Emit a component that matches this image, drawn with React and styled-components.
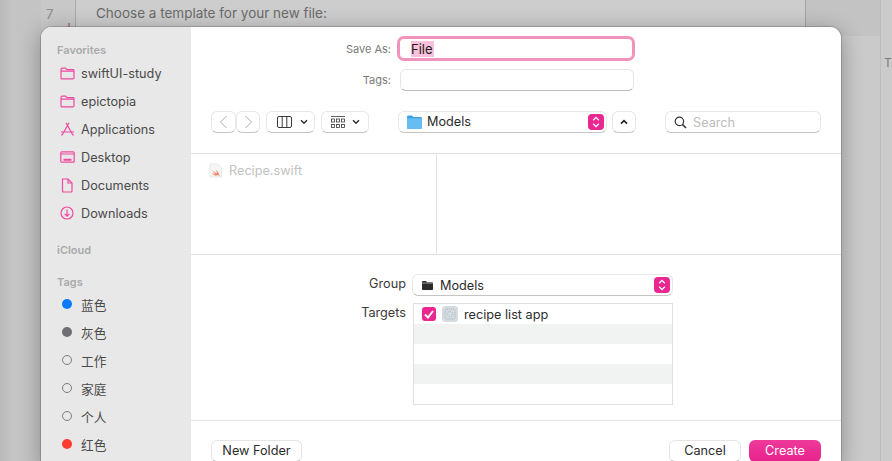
import React from "react";
import styled, { createGlobalStyle } from "styled-components";

const PINK = "#ea2790";
const ICON_PINK = "#f0489f";

const GlobalStyle = createGlobalStyle`
  html, body {
    margin: 0;
    width: 892px;
    height: 461px;
    overflow: hidden;
    background: #c6c6c6;
    font-family: Inter, "Noto Sans CJK SC", sans-serif;
    -webkit-font-smoothing: antialiased;
  }
  #root {
    position: relative;
    width: 892px;
    height: 461px;
    overflow: hidden;
  }
`;

/* window behind the sheet */
const Backdrop = styled.div`
  display: grid;
  grid-template-columns: 14px 27px 34px 731px 74px 12px;
  height: 461px;
`;

const Rail = styled.div`
  background: linear-gradient(90deg, #b9b9b9, #c6c6c6);
`;

const Gutter = styled.div`
  position: relative;
  background: ${(p) => p.$bg};
  color: #8d8d8d;
  font-size: 13px;
  padding: 6px 0 0 5px;
  box-sizing: border-box;
`;

const GutterMark = styled.span`
  position: absolute;
  left: 27px;
  top: 23px;
  width: 2px;
  height: 4px;
  background: #b87fa5;
`;

const BehindSheet = styled.div`
  height: 27px;
  box-sizing: border-box;
  background: #cdcdcd;
  border-left: 1px solid #a9a9a9;
  border-right: 1px solid #a2a2a2;
  color: #6b6b6b;
  font-size: 13.5px;
  padding: 5px 0 0 20px;
`;

const SideColumn = styled.div`
  background: linear-gradient(180deg, #c3c3c3 36px, #cacaca 36px);
`;

const Inspector = styled.div`
  background: #cbcbcb;
  border-left: 1px solid #bcbcbc;
  color: #7b7b7b;
  font-size: 12px;
  padding: 55px 0 0 3px;
  overflow: hidden;
`;

/* save sheet */
const Dialog = styled.div`
  position: absolute;
  left: 41px;
  top: 27px;
  width: 800px;
  height: 440px;
  display: flex;
  background: #fff;
  border-radius: 11px 11px 0 0;
  overflow: hidden;
`;

const DialogShadow = styled.div`
  position: absolute;
  left: 41px;
  top: 27px;
  width: 800px;
  height: 440px;
  border-radius: 11px 11px 0 0;
  box-shadow: 0 0 0 1px rgba(0, 0, 0, 0.16), 0 4px 22px rgba(0, 0, 0, 0.32);
`;

const Sidebar = styled.aside`
  width: 150px;
  flex: none;
  box-sizing: border-box;
  background: #e8e8e8;
  padding: 17px 0 0 16px;
`;

const SideHeading = styled.div`
  height: 12px;
  line-height: 12px;
  font-size: 11px;
  font-weight: 600;
  color: #aaaaaa;
  margin: ${(p) => p.$top || 0}px 0 ${(p) => p.$bottom || 0}px;
`;

const SideRow = styled.div`
  display: flex;
  align-items: center;
  height: 28px;
  font-size: 12.7px;
  color: #4a4a4a;
`;

const SideIcon = styled.span`
  width: 24px;
  flex: none;
  display: flex;
  justify-content: center;
  padding-right: 4px;
  box-sizing: border-box;
`;

const Dot = styled.span`
  width: 10px;
  height: 10px;
  box-sizing: border-box;
  border-radius: 50%;
  background: ${(p) => p.$color || "transparent"};
  border: ${(p) => (p.$color ? "0" : "1.2px solid #7d7d7d")};
`;

const Main = styled.main`
  flex: 1;
  display: flex;
  flex-direction: column;
  min-width: 0;
`;

const FormRow = styled.div`
  display: grid;
  grid-template-columns: 200px 235px;
  column-gap: 8px;
  align-items: center;
  margin-top: ${(p) => p.$top}px;
`;

const FormLabel = styled.label`
  text-align: right;
  font-size: 11px;
  color: #7a7a7a;
`;

const NameField = styled.div`
  height: 25px;
  width: 238px;
  margin-left: -2px;
  box-sizing: border-box;
  border: 3.5px solid #f194bd;
  border-radius: 7px;
  padding-left: 11px;
  display: flex;
  align-items: center;
  font-size: 13px;
  color: #1a1a1a;
`;

const Selected = styled.span`
  background: #fbc0dc;
  line-height: 16px;
  padding: 0 1px 0 0;
`;

const TagField = styled.div`
  height: 22px;
  box-sizing: border-box;
  margin-left: 1px;
  border: 1px solid #e6e6e6;
  border-bottom-color: #bdbdbd;
  border-radius: 6px;
`;

const Toolbar = styled.div`
  display: flex;
  align-items: center;
  height: 22px;
  margin: 20px;
`;

const ToolButton = styled.div`
  width: ${(p) => p.$w}px;
  height: 22px;
  flex: none;
  box-sizing: border-box;
  margin-left: ${(p) => p.$left || 0}px;
  padding-left: ${(p) => p.$pad || 0}px;
  display: flex;
  align-items: center;
  justify-content: center;
  gap: ${(p) => p.$gap || 0}px;
  background: #fff;
  border: 1px solid #e8e8e8;
  border-bottom-color: #c4c4c4;
  border-radius: 6px;
`;

const PathPopup = styled.div`
  width: 209px;
  height: 22px;
  flex: none;
  box-sizing: border-box;
  margin-left: 29px;
  display: flex;
  align-items: center;
  gap: 5px;
  padding: 0 2px 1px 8px;
  border: 1px solid #e8e8e8;
  border-bottom-color: #c4c4c4;
  border-radius: 6px;
  font-size: 12.7px;
  color: #2b2b2b;
`;

const Stepper = styled.span`
  margin-left: auto;
  width: 16px;
  height: 16px;
  flex: none;
  border-radius: 4px;
  background: ${PINK};
  display: flex;
  align-items: center;
  justify-content: center;
`;

const SearchBox = styled.div`
  width: 156px;
  height: 22px;
  flex: none;
  box-sizing: border-box;
  margin-left: 29px;
  display: flex;
  align-items: center;
  gap: 6px;
  padding-left: 8px;
  border: 1px solid #e8e8e8;
  border-bottom-color: #c4c4c4;
  border-radius: 6px;
  font-size: 12.7px;
  color: #bcbcbc;
`;

const Browser = styled.div`
  height: 100px;
  flex: none;
  display: flex;
  border-top: 1px solid #e2e2e2;
  border-bottom: 1px solid #e2e2e2;
`;

const BrowserColumn = styled.div`
  width: 246px;
  box-sizing: border-box;
  border-right: 1px solid #e2e2e2;
  padding: 9px 0 0 18px;
  display: flex;
  align-items: flex-start;
  gap: 7px;
  font-size: 12.7px;
  line-height: 16px;
  color: #c2c2c2;
`;

const OptionRow = styled.div`
  display: grid;
  grid-template-columns: 215px 261px;
  column-gap: ${(p) => p.$gap}px;
  margin-top: ${(p) => p.$top}px;
`;

const OptionLabel = styled.div`
  text-align: right;
  font-size: 12.7px;
  color: #3a3a3a;
  line-height: 20px;
`;

const GroupPopup = styled.div`
  height: 22px;
  box-sizing: border-box;
  display: flex;
  align-items: center;
  gap: 7px;
  padding: 0 2px 0 9px;
  border: 1px solid #e8e8e8;
  border-bottom-color: #c4c4c4;
  border-radius: 6px;
  font-size: 12.7px;
  color: #2b2b2b;
`;

const TargetList = styled.div`
  height: 102px;
  width: 260px;
  box-sizing: border-box;
  border: 1px solid #dfdfdf;
`;

const TargetRow = styled.div`
  height: 20px;
  display: flex;
  align-items: center;
  gap: 6px;
  padding-left: 8px;
  background: ${(p) => (p.$alt ? "#f1f3f3" : "#fff")};
  font-size: 12.7px;
  color: #2e2e2e;
`;

const CheckBox = styled.span`
  width: 14px;
  height: 14px;
  flex: none;
  border-radius: 3px;
  background: ${PINK};
  display: flex;
  align-items: center;
  justify-content: center;
`;

const Footer = styled.footer`
  margin-top: 15px;
  padding: 19px 20px 0 20px;
  border-top: 1px solid #e2e2e2;
  display: flex;
  gap: 8px;
`;

const Button = styled.div`
  width: ${(p) => p.$w}px;
  height: 22px;
  box-sizing: border-box;
  padding-bottom: 1px;
  display: flex;
  align-items: center;
  justify-content: center;
  border-radius: 6px;
  font-size: 12.7px;
  background: ${(p) => (p.$primary ? "linear-gradient(180deg, #ee3a9b, #e8218c)" : "#fff")};
  color: ${(p) => (p.$primary ? "#fff" : "#2b2b2b")};
  border: ${(p) => (p.$primary ? "0" : "1px solid #e4e4e4")};
  border-bottom-color: #c4c4c4;
  margin-right: ${(p) => (p.$spread ? "auto" : 0)};
`;

const Svg = ({ w = 16, h = 16, children, stroke = ICON_PINK, sw = 1.2 }) => (
  <svg width={w} height={h} viewBox={`0 0 ${w} ${h}`} fill="none" stroke={stroke} strokeWidth={sw}>
    {children}
  </svg>
);

const FolderIcon = () => (
  <Svg w={15} h={13}>
    <path d="M1 11V2.5C1 1.7 1.5 1.2 2.3 1.2H5.5L7 2.7H13C13.6 2.7 14 3.1 14 3.7V10.8C14 11.5 13.6 11.9 13 11.9H2C1.4 11.9 1 11.6 1 11Z" />
    <path d="M1 4.2H14" />
  </Svg>
);

const AppsIcon = () => (
  <Svg w={15} h={14}>
    <path d="M6 0.8L12.8 13M9 0.8L2.2 13M1 10H14M2.4 13H1M12.6 13H14" />
  </Svg>
);

const DesktopIcon = () => (
  <Svg w={15} h={12}>
    <rect x="0.8" y="0.8" width="13.4" height="10.4" rx="1" />
    <path d="M0.8 3H14.2" />
    <path d="M3.5 8.8H11.5" strokeWidth="2" />
  </Svg>
);

const DocumentIcon = () => (
  <Svg w={12} h={15}>
    <path d="M1.5 1H7L11 5V13C11 13.6 10.6 14 10 14H2.5C1.9 14 1.5 13.6 1.5 13Z" />
    <path d="M7 1V5H11" />
  </Svg>
);

const DownloadIcon = () => (
  <Svg w={14} h={14}>
    <circle cx="7" cy="7" r="6" />
    <path d="M7 3.5V10M4.6 7.8L7 10.2L9.4 7.8" />
  </Svg>
);

const Chevron = ({ dir }) => (
  <Svg w={9} h={16} stroke="#a9a9a9" sw={1}>
    <path d={dir === "left" ? "M7.5 2L1.5 8L7.5 14" : "M1.5 2L7.5 8L1.5 14"} />
  </Svg>
);

const ColumnsIcon = () => (
  <Svg w={15} h={12} stroke="#3a3a3a" sw={1}>
    <rect x="0.5" y="0.5" width="14" height="11" rx="1.5" />
    <path d="M5.2 0.5V11.5M9.8 0.5V11.5" />
  </Svg>
);

const GalleryIcon = () => (
  <Svg w={14} h={13} stroke="#3a3a3a" sw={0.8}>
    <path d="M0 0.5H14" />
    <rect x="0.5" y="3" width="3" height="3" />
    <rect x="5.5" y="3" width="3" height="3" />
    <rect x="10.5" y="3" width="3" height="3" />
    <rect x="0.5" y="8.5" width="3" height="3" />
    <rect x="5.5" y="8.5" width="3" height="3" />
    <rect x="10.5" y="8.5" width="3" height="3" />
  </Svg>
);

const DropChevron = () => (
  <Svg w={8} h={6} stroke="#333" sw={1.5}>
    <path d="M1 1.2L4 4.2L7 1.2" />
  </Svg>
);

const UpChevron = () => (
  <Svg w={8} h={6} stroke="#222" sw={1.6}>
    <path d="M1 4.6L4 1.6L7 4.6" />
  </Svg>
);

const StepperGlyph = () => (
  <Svg w={8} h={12} stroke="#fff" sw={1.3}>
    <path d="M1.2 4.2L4 1.4L6.8 4.2M1.2 7.8L4 10.6L6.8 7.8" />
  </Svg>
);

const BlueFolder = () => (
  <svg width="15" height="14" viewBox="0 0 15 14">
    <path d="M0 2C0 1 .6.5 1.5.5H5L6.5 2H13.5C14.4 2 15 2.5 15 3.5V12.5C15 13.4 14.4 14 13.5 14H1.5C.6 14 0 13.4 0 12.5Z" fill="#3f9fe0" />
    <path d="M0 4.2C0 3.6.4 3.2 1 3.2H14C14.6 3.2 15 3.6 15 4.2V12.5C15 13.4 14.4 14 13.5 14H1.5C.6 14 0 13.4 0 12.5Z" fill="#66bdf2" />
  </svg>
);

const DarkFolder = () => (
  <svg width="11" height="9" viewBox="0 0 11 9">
    <path d="M0 1C0 .4.4 0 1 0H4L5 1.2H10C10.6 1.2 11 1.6 11 2.2V8C11 8.6 10.6 9 10 9H1C.4 9 0 8.6 0 8Z" fill="#2a2a2a" />
    <path d="M0 2.1H11" stroke="#fff" strokeWidth=".5" />
  </svg>
);

const SearchIcon = () => (
  <Svg w={13} h={13} stroke="#333" sw={1.2}>
    <circle cx="5.4" cy="5.4" r="4.2" />
    <path d="M8.4 8.4L12 12" strokeWidth="1.5" />
  </Svg>
);

const SwiftFile = () => (
  <svg width="13" height="15" viewBox="0 0 13 15">
    <path d="M1 1H8.5L12.5 5V14H1Z" fill="#f6f6f6" stroke="#e6e6e6" />
    <path d="M3 7C5 9 7 10.2 8 10.4C8 9 7 7.5 6 6.5C8 7.8 10 9.5 10.2 11.4C10.6 12 10.6 12.4 10.5 12.8C9.8 12 8.8 12 8 12.4C6 13 4 11.5 2.6 10.2C4 10.8 5.5 10.8 6 10.4C5 9.6 3.8 8.2 3 7Z" fill="#f38a70" />
  </svg>
);

const TargetIcon = () => (
  <svg width="16" height="16" viewBox="0 0 16 16">
    <rect width="16" height="16" rx="3.5" fill="#d4dcdf" />
    <rect x="3" y="3" width="10" height="10" rx="2" fill="none" stroke="#a8b4b9" strokeDasharray="1 1" />
    <circle cx="8" cy="8" r="2.6" fill="none" stroke="#a8b4b9" strokeDasharray="1 1" />
  </svg>
);

const CheckMark = () => (
  <Svg w={10} h={9} stroke="#fff" sw={2}>
    <path d="M1 4.5L4 7.5L9 1" />
  </Svg>
);

const favorites = [
  ["swiftUI-study", <FolderIcon />],
  ["epictopia", <FolderIcon />],
  ["Applications", <AppsIcon />],
  ["Desktop", <DesktopIcon />],
  ["Documents", <DocumentIcon />],
  ["Downloads", <DownloadIcon />],
];

const tags = [
  ["蓝色", "#0a7aff"],
  ["灰色", "#6e6e73"],
  ["工作"],
  ["家庭"],
  ["个人"],
  ["红色", "#ff3b30"],
];

export default function App() {
  return (
    <>
      <GlobalStyle />
      <Backdrop>
        <Rail />
        <Gutter $bg="#c4c4c4" />
        <Gutter $bg="#c8c8c8">
          7
          <GutterMark />
        </Gutter>
        <div>
          <BehindSheet>Choose a template for your new file:</BehindSheet>
        </div>
        <SideColumn />
        <Inspector>T</Inspector>
      </Backdrop>
      <DialogShadow />
      <Dialog>
        <Sidebar>
          <SideHeading $bottom={3}>Favorites</SideHeading>
          {favorites.map(([name, icon]) => (
            <SideRow key={name}>
              <SideIcon>{icon}</SideIcon>
              {name}
            </SideRow>
          ))}
          <SideHeading $top={17}>iCloud</SideHeading>
          <SideHeading $top={20} $bottom={2}>Tags</SideHeading>
          {tags.map(([name, color]) => (
            <SideRow key={name}>
              <SideIcon>
                <Dot $color={color} />
              </SideIcon>
              {name}
            </SideRow>
          ))}
        </Sidebar>
        <Main>
          <FormRow $top={9}>
            <FormLabel>Save As:</FormLabel>
            <NameField>
              <Selected>File</Selected>
            </NameField>
          </FormRow>
          <FormRow $top={8}>
            <FormLabel>Tags:</FormLabel>
            <TagField />
          </FormRow>
          <Toolbar>
            <ToolButton $w={25}>
              <Chevron dir="left" />
            </ToolButton>
            <ToolButton $w={24}>
              <Chevron dir="right" />
            </ToolButton>
            <ToolButton $w={49} $left={6} $gap={8} $pad={3}>
              <ColumnsIcon />
              <DropChevron />
            </ToolButton>
            <ToolButton $w={48} $left={6} $gap={7}>
              <GalleryIcon />
              <DropChevron />
            </ToolButton>
            <PathPopup>
              <BlueFolder />
              Models
              <Stepper>
                <StepperGlyph />
              </Stepper>
            </PathPopup>
            <ToolButton $w={24} $left={5}>
              <UpChevron />
            </ToolButton>
            <SearchBox>
              <SearchIcon />
              Search
            </SearchBox>
          </Toolbar>
          <Browser>
            <BrowserColumn>
              <SwiftFile />
              Recipe.swift
            </BrowserColumn>
          </Browser>
          <OptionRow $top={19} $gap={6}>
            <OptionLabel>Group</OptionLabel>
            <GroupPopup>
              <DarkFolder />
              Models
              <Stepper>
                <StepperGlyph />
              </Stepper>
            </GroupPopup>
          </OptionRow>
          <OptionRow $top={7} $gap={7}>
            <OptionLabel>Targets</OptionLabel>
            <TargetList>
              <TargetRow>
                <CheckBox>
                  <CheckMark />
                </CheckBox>
                <TargetIcon />
                recipe list app
              </TargetRow>
              <TargetRow $alt />
              <TargetRow />
              <TargetRow $alt />
              <TargetRow />
            </TargetList>
          </OptionRow>
          <Footer>
            <Button $w={91} $spread>New Folder</Button>
            <Button $w={72}>Cancel</Button>
            <Button $w={72} $primary>Create</Button>
          </Footer>
        </Main>
      </Dialog>
    </>
  );
}
